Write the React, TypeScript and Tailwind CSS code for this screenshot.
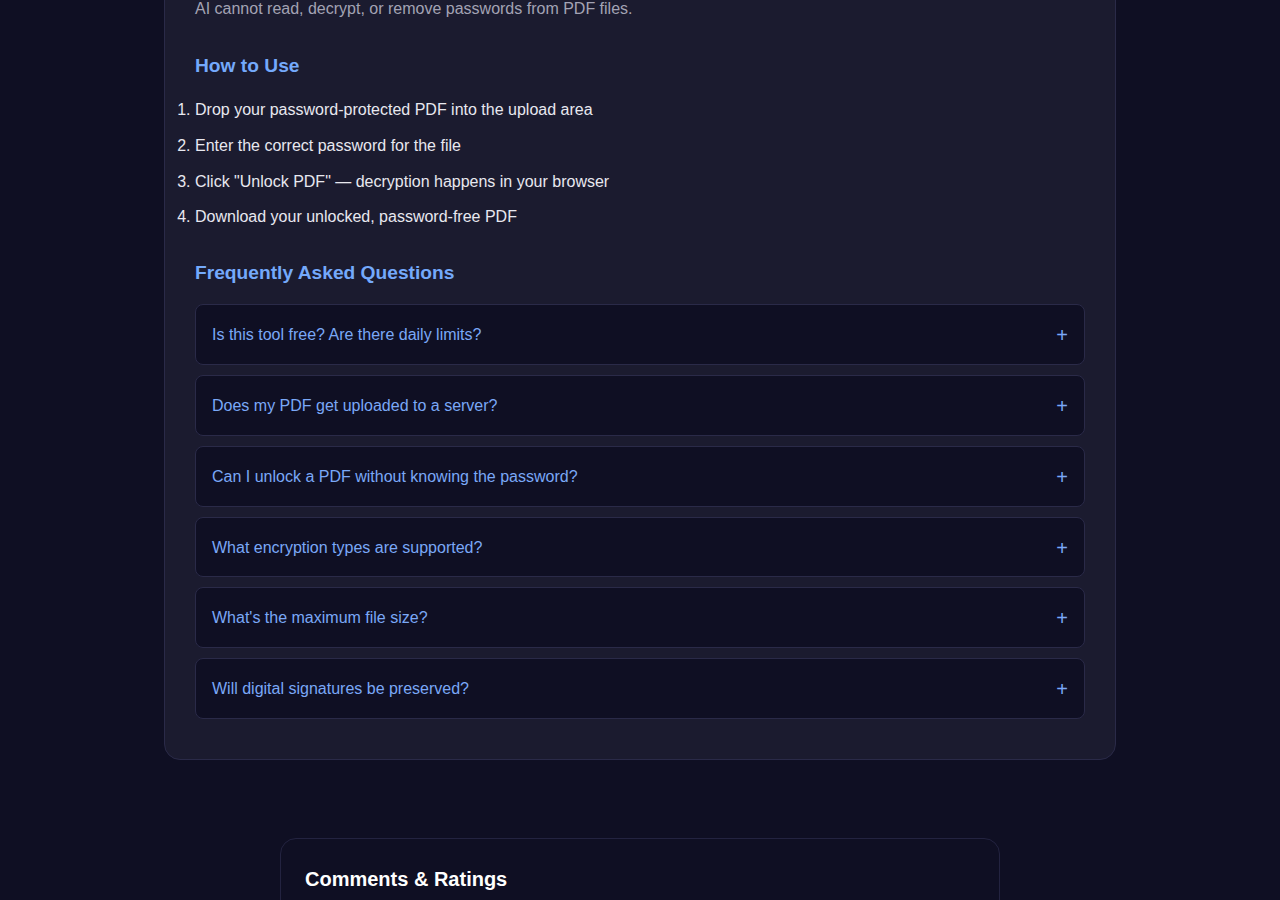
const steps = [
  'Drop your password-protected PDF into the upload area',
  'Enter the correct password for the file',
  'Click "Unlock PDF" — decryption happens in your browser',
  'Download your unlocked, password-free PDF',
];

const faqs = [
  'Is this tool free? Are there daily limits?',
  'Does my PDF get uploaded to a server?',
  'Can I unlock a PDF without knowing the password?',
  'What encryption types are supported?',
  "What's the maximum file size?",
  'Will digital signatures be preserved?',
];

function FaqItem({ question }: { question: string }) {
  return (
    <button
      type="button"
      className="flex w-full items-center justify-between rounded-lg border border-[#2a2a48] bg-[#0f0f23] px-4 pt-[19px] pb-[17px] text-left text-[16px] leading-[22.7px] text-[#7aa8f7]"
    >
      <span>{question}</span>
      <span className="text-[20px] leading-[22.7px] font-light">+</span>
    </button>
  );
}

export default function App() {
  return (
    <div
      className="min-h-[900px] overflow-hidden bg-[#0f0f23] pb-20 leading-[1.6] text-[#e8e8ef]"
      style={{ fontFamily: '"Liberation Sans", Arial, sans-serif' }}
    >
      {/* Tool info card */}
      <section className="mx-auto -mt-[35px] w-[952px] rounded-2xl border border-[#2a2a48] bg-[#1b1b2f] p-[30px]">
        <p className="text-[16px] text-[#a3a3b4]">AI cannot read, decrypt, or remove passwords from PDF files.</p>

        <h2 className="mt-[29px] mb-4 text-[19.2px] font-bold text-[#74a9fb]">How to Use</h2>
        <ol className="list-decimal space-y-[10px] text-[16px]">
          {steps.map((s) => (
            <li key={s}>{s}</li>
          ))}
        </ol>

        <h2 className="mt-7 mb-4 text-[19.2px] font-bold text-[#74a9fb]">Frequently Asked Questions</h2>
        <div className="flex flex-col gap-[10px]">
          {faqs.map((q) => (
            <FaqItem key={q} question={q} />
          ))}
        </div>
        <div className="h-[10px]" />
      </section>

      {/* Comments */}
      <section className="mx-auto mt-[78px] w-[720px] rounded-2xl border border-[#232340] bg-[#0f0f23] p-6">
        <h3 className="text-[20px] font-bold text-white">Comments &amp; Ratings</h3>
        <div className="h-40" />
      </section>
    </div>
  );
}
